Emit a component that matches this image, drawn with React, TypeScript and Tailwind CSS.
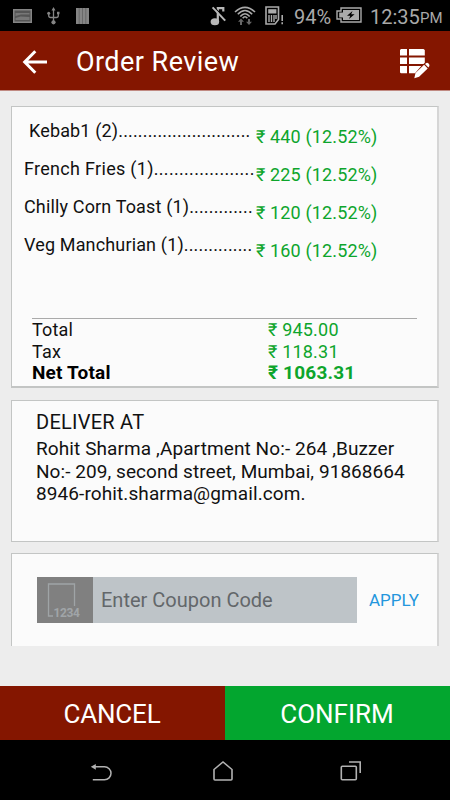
const items = [
  { name: 'Kebab1 (2)', dots: 27, price: '₹ 440 (12.52%)', pad: 'pl-[5px]' },
  { name: 'French Fries (1)', dots: 20, price: '₹ 225 (12.52%)', pad: 'tracking-[0.3px]' },
  { name: 'Chilly Corn Toast (1)', dots: 13, price: '₹ 120 (12.52%)', pad: '' },
  { name: 'Veg Manchurian (1)', dots: 14, price: '₹ 160 (12.52%)', pad: '' },
];

const totals = [
  { label: 'Total', value: '₹ 945.00', style: 'text-[18px]' },
  { label: 'Tax', value: '₹ 118.31', style: 'text-[18px]' },
  { label: 'Net Total', value: '₹ 1063.31', style: 'font-bold text-[19px] text-black' },
];

function StatusBar() {
  return (
    <div className="flex h-[31px] shrink-0 items-center bg-black text-[#a9a9a9]">
      <svg className="ml-[13px] h-[14px] w-[19px]" viewBox="0 0 19 14">
        <rect x="0.75" y="0.75" width="17.5" height="12.5" fill="#555" stroke="#858585" strokeWidth="1.5" />
        <path d="M2.5 4h14v1.5H8L2.5 7zM2.5 9l5-1.5 9 .5v3h-14z" fill="#777" />
      </svg>
      <svg className="ml-[15px] h-[18px] w-[13px]" viewBox="0 0 13 18" fill="none" stroke="#858585" strokeWidth="1.3">
        <path d="M6.5 2v13M1.7 6v2.5q0 2 2 2h5.6q2 0 2-2V6" />
        <path d="M6.5 0L4.5 3.5h4zM10 4.8h2.5v2.5H10z" fill="#858585" stroke="none" />
        <circle cx="1.7" cy="6.3" r="1.5" fill="#858585" stroke="none" />
        <circle cx="6.5" cy="15.3" r="2.1" fill="#858585" stroke="none" />
      </svg>
      <svg className="ml-[16px] h-[16px] w-[13px]" viewBox="0 0 13 16">
        <rect width="13" height="16" fill="#858585" />
        <path d="M3.2 0v16M6.5 0v16M9.8 0v16" stroke="#555" strokeWidth="0.6" />
      </svg>
      <svg className="ml-[121px] h-[20px] w-[16px]" viewBox="0 0 16 20" fill="none" stroke="#b8b8b8">
        <path d="M7.8 16V2.2h5.5v3.2" strokeWidth="2.2" />
        <ellipse cx="4.9" cy="15.7" rx="4.3" ry="3.5" fill="#b8b8b8" stroke="none" />
        <path d="M4.4 1.4L15.2 12.5" stroke="#000" strokeWidth="1.2" />
        <path d="M2.6 1.4L15.2 14.6" strokeWidth="2" />
      </svg>
      <svg className="ml-[8px] h-[20px] w-[22px]" viewBox="0 0 22 20" fill="none" stroke="#aaa" strokeWidth="1.6">
        <path d="M1 6Q11-3.3 21 6M3.8 8.3Q11 .8 18.2 8.3M6.3 10.6Q11 5 15.7 10.6M8.7 12.3Q11 9.2 13.3 12.3" />
        <path d="M7 12.5L4 15.8h2V19h2v-3.2h2zM15 19l-3-3.3h2V13h2v2.7h2z" fill="#666" stroke="none" />
      </svg>
      <svg className="ml-[9px] h-[19px] w-[19px]" viewBox="0 0 19 19" fill="none" stroke="#aaa">
        <path d="M1 1h12.5v12.5L10 18H1z" strokeWidth="1.6" />
        <path d="M3.2 3.2h8.2v4.3H3.2z" fill="#aaa" stroke="none" />
        <path d="M4 9v7M6.5 9v7M9 9v7M11 9v4" strokeWidth="1.4" />
        <path d="M17.2 9v6M17.2 16.2v2" strokeWidth="1.6" />
      </svg>
      <span className="ml-[10px] w-[42px] pt-[2px] text-[20px] leading-[24px] whitespace-nowrap">94%</span>
      <svg className="-mt-px h-[16px] w-[26px]" viewBox="0 0 26 16">
        <path d="M5 1h20v14H5v-3H1V4h4z" fill="#000" stroke="#aaa" strokeWidth="1.4" />
        <path d="M7 3h16v10H7v-2.5H3.2v-5H7z" fill="#aaa" />
        <path d="M16.5 4L11 8.7h3.3L13 12l5.6-4.8h-3.4z" fill="#000" />
      </svg>
      <span className="ml-[8px] w-[50px] pt-[2px] text-[20px] leading-[24px] whitespace-nowrap">12:35</span>
      <span className="pt-[5px] text-[15px] leading-[20px]">PM</span>
    </div>
  );
}

function Header() {
  return (
    <header className="flex h-[60px] shrink-0 items-center border-b border-b-[#c08a82] bg-[#841600] pt-[2px]">
      <svg className="ml-[22px] h-[24px] w-[25px]" viewBox="0 0 25 24" fill="none" stroke="#fff" strokeWidth="3">
        <path d="M13.3 1.3L2.7 12l10.6 10.7M2.5 12H25" />
      </svg>
      <h1 className="ml-[29px] flex-1 pt-px text-[27px] leading-[32px] font-normal tracking-[0.45px] text-white">
        Order Review
      </h1>
      <svg className="mt-[3px] mr-[20px] h-[31px] w-[31px]" viewBox="0 0 31 31" fill="#fff">
        <path d="M2 1h6v6.5H1V2zM10 1h14.5l1.3 1V7.5H10zM1 9.5h7V16H1zM10 9.5h15.8v5.2L24.5 16H10zM1 18h7v7.3H2L1 24.5zM10 18h12.3L16 25.3h-6z" />
        <path d="M15.3 30.3l1.2-5.2 8.6-8.3 3.6 3.7-8.6 8.3zM26 16l1.4-1q1-.6 2.2.5t.8 2.4l-1 1.5z" />
      </svg>
    </header>
  );
}

const card = 'ml-[11px] w-[428px] shrink-0 border border-r-2 border-[#c3c5c4] border-r-[#d6d6d6] bg-[#fbfbfb]';

export default function App() {
  return (
    <div className="flex h-[800px] w-[450px] flex-col overflow-hidden bg-[#ededed] font-[Roboto,'Noto_Sans',sans-serif] text-[#111]">
      <StatusBar />
      <Header />
      <main className="flex h-[595px] shrink-0 flex-col pt-[15px]">
        <section className={`${card} h-[282px] border-b-2`}>
          <div className="flex h-[211px] flex-col pt-[12px] pl-[12px]">
            {items.map((item) => (
              <div key={item.name} className="flex h-[38px] text-[18px] leading-[24px] tracking-[0.15px] whitespace-nowrap">
                <div className={`w-[228px] ${item.pad}`}>
                  {item.name}
                  {'.'.repeat(item.dots)}
                </div>
                <div className="pt-[6px] pl-[4px] text-[#0da52c]">{item.price}</div>
              </div>
            ))}
          </div>
          <div className="ml-[20px] w-[385px] border-t border-[#aaa]">
            {totals.map((row) => (
              <div key={row.label} className={`flex h-[21.5px] leading-[22px] tracking-[0.2px] ${row.style}`}>
                <span className="w-[236px]">{row.label}</span>
                <span className="text-[#0da52c]">{row.value}</span>
              </div>
            ))}
          </div>
        </section>

        <section className={`${card} mt-[12px] h-[142px] pt-[9px] pl-[24px]`}>
          <h2 className="text-[20px] leading-[24px] font-normal tracking-[0.25px]">DELIVER AT</h2>
          <p className="mt-[4px] text-[19px] leading-[22.5px] tracking-[0.1px] whitespace-nowrap">
            Rohit Sharma ,Apartment No:- 264 ,Buzzer
            <br />
            <span className="tracking-[0.06px]">No:- 209, second street, Mumbai, 91868664</span>
            <br />
            8946-rohit.sharma@gmail.com.
          </p>
        </section>

        <section className={`${card} mt-[11px] flex h-[93px] border-b-0 pt-[23px] pl-[25px]`}>
          <div className="flex h-[46px] w-[56px] items-center justify-center bg-[#808080]">
            <svg className="h-[36px] w-[36px]" viewBox="0 0 36 36">
              <path d="M6 34H1.5V2h26v22" fill="none" stroke="#9fa4a6" strokeWidth="1.3" />
              <text x="6.5" y="34.5" fontSize="12" fontWeight="700" textLength="26.5" fill="#a0a5a8">
                1234
              </text>
            </svg>
          </div>
          <div className="flex h-[46px] w-[264px] items-center bg-[#bec4c8] pl-[8px] text-[20px] text-[#63676a]">
            Enter Coupon Code
          </div>
          <button className="ml-[12px] h-[48px] text-[17px] text-[#2396dd]">APPLY</button>
        </section>
      </main>

      <div className="flex h-[54px] shrink-0 text-[26px] text-white">
        <button className="w-[225px] bg-[#841600] pt-[2px] pr-[1px] tracking-[-0.2px]">CANCEL</button>
        <button className="w-[225px] bg-[#03a62f] pt-[2px] pr-[1px]">CONFIRM</button>
      </div>
      <nav className="flex h-[60px] shrink-0 items-start bg-black">
        <svg className="mt-[23px] ml-[90px] h-[20px] w-[23px]" viewBox="0 0 23 20" fill="none" stroke="#b2b2b2" strokeWidth="1.5">
          <path d="M4 3.8h10.5a6.5 6.5 0 0 1 0 13H2.8" />
          <path d="M.8 3.8L5.8 1v5.7z" fill="#b2b2b2" stroke="none" />
        </svg>
        <svg className="mt-[20px] ml-[99px] h-[22px] w-[22px]" viewBox="0 0 22 22" fill="none" stroke="#b2b2b2" strokeWidth="1.6">
          <path d="M2 9.5L11 2l9 7.5V19q0 1-1 1H3q-1 0-1-1z" />
        </svg>
        <svg className="mt-[20px] ml-[106px] h-[22px] w-[22px]" viewBox="0 0 22 22" fill="none" stroke="#b2b2b2" strokeWidth="1.6">
          <rect x="1.3" y="6.3" width="15" height="13.4" rx="1" />
          <path d="M9 2h11.2v11" />
        </svg>
      </nav>
    </div>
  );
}
